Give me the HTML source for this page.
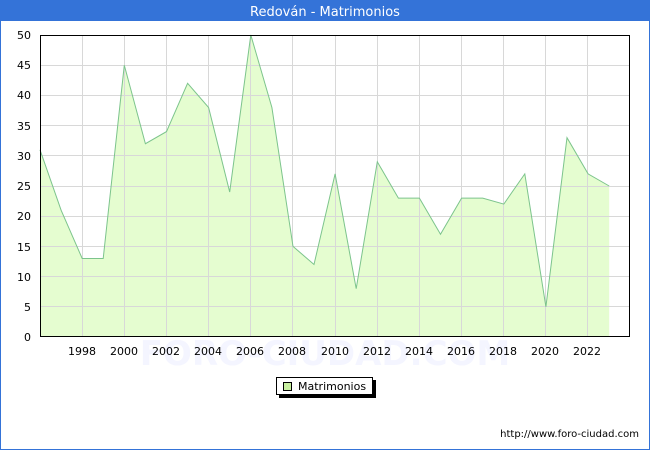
<!DOCTYPE html>
<html><head><meta charset="utf-8"><style>
body{margin:0;width:650px;height:450px;overflow:hidden;background:#fff;font-family:"DejaVu Sans","Liberation Sans",sans-serif}
</style></head><body>
<svg width="650" height="450" xmlns="http://www.w3.org/2000/svg" font-family="DejaVu Sans, Liberation Sans, sans-serif">
<rect x="0.5" y="0.5" width="649" height="449" fill="#fff" stroke="#3473d8"/>
<rect x="0" y="0" width="650" height="21" fill="#3473d8"/>
<text x="325" y="16" fill="#fff" font-size="13" text-anchor="middle">Redován - Matrimonios</text>
<text x="325" y="365" fill="#f4f5ff" font-size="34" text-anchor="middle" font-weight="bold">FORO-CIUDAD.COM</text>
<polygon fill="#e5fdd0" points="40,337 40,149.8 61.1,210.2 82.2,258.5 103.2,258.5 124.3,65.2 145.4,143.7 166.5,131.6 187.6,83.3 208.6,107.5 229.7,192 250.8,35 271.9,107.5 293,246.4 314,264.5 335.1,173.9 356.2,288.7 377.3,161.8 398.4,198.1 419.4,198.1 440.5,234.3 461.6,198.1 482.7,198.1 503.8,204.1 524.8,173.9 545.9,306.8 567,137.7 588.1,173.9 609.2,186 609.2,337"/>
<g stroke="#d8d8d8" stroke-width="1">
<line x1="40" y1="306.5" x2="630" y2="306.5"/><line x1="40" y1="276.5" x2="630" y2="276.5"/><line x1="40" y1="246.5" x2="630" y2="246.5"/><line x1="40" y1="216.5" x2="630" y2="216.5"/><line x1="40" y1="186.5" x2="630" y2="186.5"/><line x1="40" y1="155.5" x2="630" y2="155.5"/><line x1="40" y1="125.5" x2="630" y2="125.5"/><line x1="40" y1="95.5" x2="630" y2="95.5"/><line x1="40" y1="65.5" x2="630" y2="65.5"/>
<line x1="82.5" y1="35" x2="82.5" y2="337"/><line x1="124.5" y1="35" x2="124.5" y2="337"/><line x1="166.5" y1="35" x2="166.5" y2="337"/><line x1="208.5" y1="35" x2="208.5" y2="337"/><line x1="250.5" y1="35" x2="250.5" y2="337"/><line x1="292.5" y1="35" x2="292.5" y2="337"/><line x1="335.5" y1="35" x2="335.5" y2="337"/><line x1="377.5" y1="35" x2="377.5" y2="337"/><line x1="419.5" y1="35" x2="419.5" y2="337"/><line x1="461.5" y1="35" x2="461.5" y2="337"/><line x1="503.5" y1="35" x2="503.5" y2="337"/><line x1="545.5" y1="35" x2="545.5" y2="337"/><line x1="587.5" y1="35" x2="587.5" y2="337"/>
</g>
<polyline fill="none" stroke="#7cc48c" stroke-width="1" points="40,149.8 61.1,210.2 82.2,258.5 103.2,258.5 124.3,65.2 145.4,143.7 166.5,131.6 187.6,83.3 208.6,107.5 229.7,192 250.8,35 271.9,107.5 293,246.4 314,264.5 335.1,173.9 356.2,288.7 377.3,161.8 398.4,198.1 419.4,198.1 440.5,234.3 461.6,198.1 482.7,198.1 503.8,204.1 524.8,173.9 545.9,306.8 567,137.7 588.1,173.9 609.2,186"/>
<rect x="40.5" y="35.5" width="589" height="301" fill="none" stroke="#000"/>
<g font-size="11" fill="#000" text-anchor="end">
<text x="31" y="341">0</text><text x="31" y="311">5</text><text x="31" y="281">10</text><text x="31" y="251">15</text><text x="31" y="220">20</text><text x="31" y="190">25</text><text x="31" y="160">30</text><text x="31" y="130">35</text><text x="31" y="99">40</text><text x="31" y="69">45</text><text x="31" y="39">50</text>
</g>
<g font-size="11" fill="#000" text-anchor="middle">
<text x="82" y="355">1998</text><text x="124" y="355">2000</text><text x="166" y="355">2002</text><text x="208" y="355">2004</text><text x="250" y="355">2006</text><text x="292" y="355">2008</text><text x="335" y="355">2010</text><text x="377" y="355">2012</text><text x="419" y="355">2014</text><text x="461" y="355">2016</text><text x="503" y="355">2018</text><text x="545" y="355">2020</text><text x="587" y="355">2022</text>
</g>
<rect x="279" y="380" width="97" height="18" fill="#000"/>
<rect x="276.5" y="377.5" width="96" height="17" fill="#fff" stroke="#000"/>
<rect x="283.5" y="382.5" width="8" height="8" fill="#c8f0a0" stroke="#000"/>
<text x="298" y="390" font-size="11">Matrimonios</text>
<text x="639" y="437" font-size="10" text-anchor="end">http://www.foro-ciudad.com</text>
</svg>
</body></html>
